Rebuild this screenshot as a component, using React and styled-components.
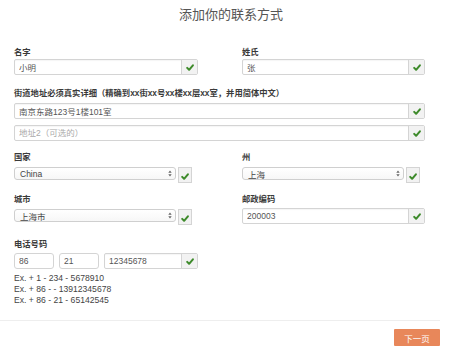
import React from 'react';
import styled, { createGlobalStyle } from 'styled-components';

const GlobalStyle = createGlobalStyle`
  body {
    margin: 0;
    background: #fff;
    font-family: "Liberation Sans", "Noto Sans CJK SC", sans-serif;
  }
`;

const Page = styled.div`
  width: 462px;
  height: 351px;
  overflow: hidden;
  color: #333;
`;

const Title = styled.h1`
  margin: 0;
  padding-top: 6px;
  height: 16px;
  line-height: 16px;
  text-align: center;
  font-size: 13px;
  font-weight: normal;
  color: #555;
  font-family: "Noto Sans CJK SC", sans-serif;
`;

const Form = styled.form`
  width: 411px;
  padding: 24px 0 0 14px;
  display: flex;
  flex-direction: column;
`;

const Row = styled.div`
  display: grid;
  grid-template-columns: 184px 183px;
  column-gap: 44px;
  margin-top: ${(p) => p.$top || 0}px;
`;

const Field = styled.div`
  display: flex;
  flex-direction: column;
  margin-top: ${(p) => p.$top || 0}px;
`;

const Label = styled.label`
  font-size: 8.3px;
  line-height: 12px;
  font-weight: bold;
  color: #3a3a3a;
  margin-bottom: ${(p) => p.$gap ?? 2}px;
  white-space: nowrap;
`;

const Group = styled.div`
  display: flex;
  height: 16px;
  border: 1px solid #d4d4d4;
  border-radius: 2px;
  box-sizing: border-box;
  box-shadow: inset 0 1px 1px rgba(0, 0, 0, 0.04);
`;

const Input = styled.input`
  flex: 1;
  min-width: 0;
  border: none;
  outline: none;
  padding: 0 4px;
  font: inherit;
  font-size: 8.5px;
  color: #555;
  background: transparent;
  &::placeholder {
    color: #aaa;
  }
`;

const Addon = styled.span`
  width: 15px;
  flex: none;
  display: flex;
  align-items: center;
  justify-content: center;
  background: #f2f2f2;
  border-left: 1px solid #d4d4d4;
`;

const SelectRow = styled.div`
  display: flex;
  align-items: flex-start;
  gap: 2px;
`;

const Select = styled.div`
  width: ${(p) => p.$w}px;
  height: 13px;
  box-sizing: border-box;
  border: 1px solid #cfcfcf;
  border-radius: 3px;
  background: linear-gradient(#fff, #f7f7f7);
  display: flex;
  align-items: center;
  justify-content: space-between;
  padding: 0 3px 0 5px;
  font-size: 8.5px;
  color: #444;
`;

const CheckBox = styled.span`
  width: 14px;
  height: 16px;
  box-sizing: border-box;
  border: 1px solid #d4d4d4;
  background: #f2f2f2;
  display: flex;
  align-items: center;
  justify-content: center;
  padding-top: 2px;
`;

const PhoneRow = styled.div`
  display: flex;
  gap: 5px;
`;

const Small = styled.input`
  width: 40px;
  height: 16px;
  box-sizing: border-box;
  border: 1px solid #d4d4d4;
  border-radius: 3px;
  padding: 0 4px;
  font: inherit;
  font-size: 8.5px;
  color: #555;
  outline: none;
`;

const Examples = styled.div`
  margin-top: 4px;
  font-size: 8.6px;
  line-height: 11px;
  color: #444;
`;

const Footer = styled.div`
  margin-top: 14px;
  width: 440px;
  border-top: 1px solid #eee;
  display: flex;
  justify-content: flex-end;
  padding-top: 8px;
`;

const NextButton = styled.button`
  width: 46px;
  height: 17px;
  border: none;
  border-radius: 1px;
  background: #e8875a;
  color: #fff;
  font-size: 8.5px;
  font-family: "Noto Sans CJK SC", sans-serif;
  padding: 0;
`;

const Check = () => (
  <svg width="8" height="7" viewBox="0 0 8 7">
    <path d="M1.2 3.9 L3.1 5.8 L6.9 1.3" fill="none" stroke="#3d8a2a" strokeWidth="2" strokeLinecap="round" strokeLinejoin="round" />
  </svg>
);

const Arrows = () => (
  <svg width="4" height="7" viewBox="0 0 4 7">
    <path d="M0.3 2.8 L2 0.6 L3.7 2.8 Z M0.3 4.2 L2 6.4 L3.7 4.2 Z" fill="#666" />
  </svg>
);

const TextField = ({ value, placeholder }) => (
  <Group>
    <Input defaultValue={value} placeholder={placeholder} />
    <Addon><Check /></Addon>
  </Group>
);

const SelectField = ({ value, width }) => (
  <SelectRow>
    <Select $w={width}>
      <span>{value}</span>
      <Arrows />
    </Select>
    <CheckBox><Check /></CheckBox>
  </SelectRow>
);

const App = () => {
  return (
    <Page>
      <GlobalStyle />
      <Title>添加你的联系方式</Title>
      <Form>
        <Row>
          <Field>
            <Label $gap={1}>名字</Label>
            <TextField value="小明" />
          </Field>
          <Field>
            <Label $gap={1}>姓氏</Label>
            <TextField value="张" />
          </Field>
        </Row>
        <Field $top={12}>
          <Label $gap={4}>街道地址必须真实详细（精确到xx街xx号xx楼xx层xx室，并用简体中文）</Label>
          <TextField value="南京东路123号1楼101室" />
        </Field>
        <Field $top={6}>
          <TextField placeholder="地址2（可选的）" />
        </Field>
        <Row $top={10}>
          <Field>
            <Label $gap={4}>国家</Label>
            <SelectField value="China" width={162} />
          </Field>
          <Field>
            <Label $gap={4}>州</Label>
            <SelectField value="上海" width={162} />
          </Field>
        </Row>
        <Row $top={10}>
          <Field>
            <Label $gap={4}>城市</Label>
            <SelectField value="上海市" width={162} />
          </Field>
          <Field>
            <Label $gap={3}>邮政编码</Label>
            <TextField value="200003" />
          </Field>
        </Row>
        <Field $top={13}>
          <Label $gap={3}>电话号码</Label>
          <PhoneRow>
            <Small defaultValue="86" />
            <Small defaultValue="21" />
            <div style={{ width: 94 }}>
              <TextField value="12345678" />
            </div>
          </PhoneRow>
          <Examples>
            <div>Ex. + 1 - 234 - 5678910</div>
            <div>Ex. + 86 - - 13912345678</div>
            <div>Ex. + 86 - 21 - 65142545</div>
          </Examples>
        </Field>
      </Form>
      <Footer>
        <NextButton type="button">下一页</NextButton>
      </Footer>
    </Page>
  );
};

export default App;
